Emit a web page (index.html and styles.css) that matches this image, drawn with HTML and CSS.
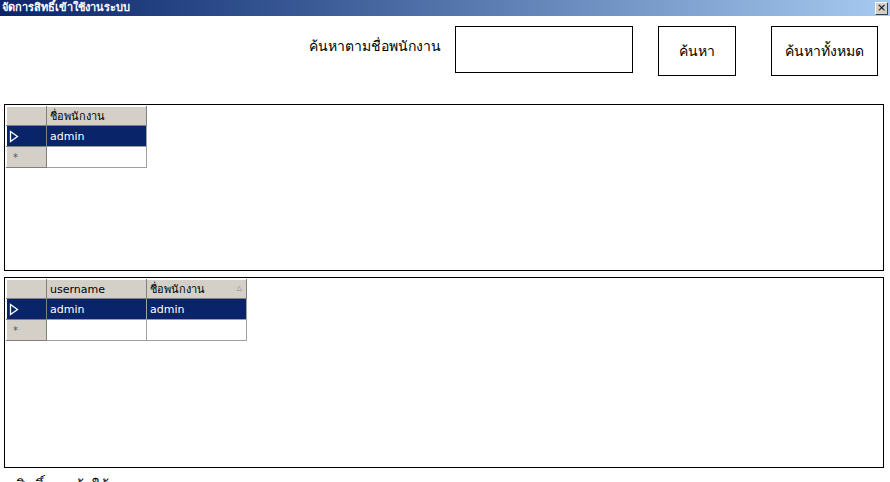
FILE: index.html
```html
<!DOCTYPE html>
<html lang="th">
<head>
  <meta charset="UTF-8">
  <title>จัดการสิทธิ์เข้าใช้งานระบบ</title>
  <link rel="stylesheet" href="styles.css">
</head>
<body>
  <div class="titlebar">
    <span class="title">จัดการสิทธิ์เข้าใช้งานระบบ</span>
    <span class="close">×</span>
  </div>

  <!-- ค้นหา -->
  <div class="search">
    <label class="search-label" for="name">ค้นหาตามชื่อพนักงาน</label>
    <input class="search-input" id="name" type="text">
    <button class="btn btn-search">ค้นหา</button>
    <button class="btn btn-all">ค้นหาทั้งหมด</button>
  </div>

  <!-- รายชื่อพนักงาน -->
  <div class="panel panel-top">
    <table class="grid cols-1">
      <tr class="head">
        <th class="rowhead"></th>
        <th>ชื่อพนักงาน</th>
      </tr>
      <tr class="selected">
        <td class="rowhead">
          <svg class="arrow" width="10" height="13" viewBox="0 0 10 13"><path d="M1.5 1.5 L8.5 6.5 L1.5 11.5 Z" fill="none" stroke="#fff" stroke-width="1.3"/></svg>
        </td>
        <td>admin</td>
      </tr>
      <tr class="newrow">
        <td class="rowhead"><span class="star">*</span></td>
        <td></td>
      </tr>
    </table>
  </div>

  <!-- ผู้ใช้ -->
  <div class="panel panel-bottom">
    <table class="grid cols-2">
      <tr class="head">
        <th class="rowhead"></th>
        <th>username</th>
        <th class="sorted">ชื่อพนักงาน <span class="sort">▵</span></th>
      </tr>
      <tr class="selected">
        <td class="rowhead">
          <svg class="arrow" width="10" height="13" viewBox="0 0 10 13"><path d="M1.5 1.5 L8.5 6.5 L1.5 11.5 Z" fill="none" stroke="#fff" stroke-width="1.3"/></svg>
        </td>
        <td>admin</td>
        <td>admin</td>
      </tr>
      <tr class="newrow">
        <td class="rowhead"><span class="star">*</span></td>
        <td></td>
        <td></td>
      </tr>
    </table>
  </div>

  <div class="footer-label">สิทธิ์การเข้าใช้</div>
</body>
</html>
```

FILE: styles.css
```css
body {
  margin: 0;
  padding: 0;
  width: 890px;
  height: 482px;
  overflow: hidden;
  background: #fff;
  font-family: 'DejaVu Sans', 'Noto Sans', sans-serif;
  color: #000;
}
.titlebar {
  height: 16px;
  display: flex;
  align-items: center;
  justify-content: space-between;
  background: linear-gradient(to right, #0a246a, #3a5a96 35%, #a6caf0);
}
.title {
  color: #fff;
  font-weight: bold;
  font-size: 11px;
  padding-left: 2px;
  line-height: 16px;
}
.close {
  width: 11px;
  height: 11px;
  margin-right: 2px;
  background: #d4d0c8;
  border: 1px solid;
  border-color: #fff #404040 #404040 #fff;
  font-size: 11px;
  line-height: 10px;
  text-align: center;
  color: #000;
}
.search {
  height: 88px;
  display: flex;
  align-items: flex-start;
  justify-content: flex-end;
  padding: 10px 12px 0 0;
  box-sizing: border-box;
}
.search-label {
  font-size: 14px;
  margin-top: 9px;
  margin-right: 14px;
}
.search-input {
  width: 178px;
  height: 47px;
  box-sizing: border-box;
  border: 1px solid #000;
  margin: 0 25px 0 0;
  padding: 0;
}
.btn {
  height: 50px;
  box-sizing: border-box;
  border: 1px solid #000;
  background: #fff;
  font-family: inherit;
  font-size: 14px;
  padding: 0;
}
.btn-search {
  width: 78px;
  margin-right: 35px;
}
.btn-all {
  width: 107px;
}
.panel {
  margin: 0 6px 0 4px;
  border: 1px solid #000;
  padding: 1px;
  box-sizing: border-box;
}
.panel-top {
  height: 167px;
}
.panel-bottom {
  margin-top: 6px;
  height: 191px;
}
.grid {
  border-collapse: collapse;
  table-layout: fixed;
  font-size: 11px;
  font-family: 'DejaVu Sans', 'Noto Sans', sans-serif;
}
.cols-1 {
  width: 140px;
}
.cols-2 {
  width: 240px;
}
.grid th, .grid td {
  border: 1px solid #a0a0a0;
  padding: 0 0 0 3px;
  text-align: left;
  height: 20px;
  width: 100px;
  box-sizing: border-box;
  white-space: nowrap;
}
.grid .head th {
  background: #d4d0c8;
  font-weight: normal;
  height: 18px;
  border-color: #fff #808080 #808080 #fff;
}
.grid .rowhead {
  width: 40px;
  background: #d4d0c8;
  border-color: #fff #808080 #808080 #fff;
  padding: 0 0 0 2px;
}
.grid .head th.rowhead {
  width: 40px;
}
.selected td {
  background: #0a246a;
  color: #fff;
  height: 21px;
}
.selected td.rowhead {
  background: #0a246a;
}
.newrow td {
  height: 21px;
}
.arrow {
  display: block;
}
.star {
  color: #555;
  font-size: 10px;
  padding-left: 4px;
}
.sorted {
  position: relative;
}
.sort {
  position: absolute;
  right: 4px;
  top: 1px;
  color: #a0a0a0;
  font-size: 11px;
}
.footer-label {
  font-size: 15px;
  padding: 6px 0 0 16px;
}
```
